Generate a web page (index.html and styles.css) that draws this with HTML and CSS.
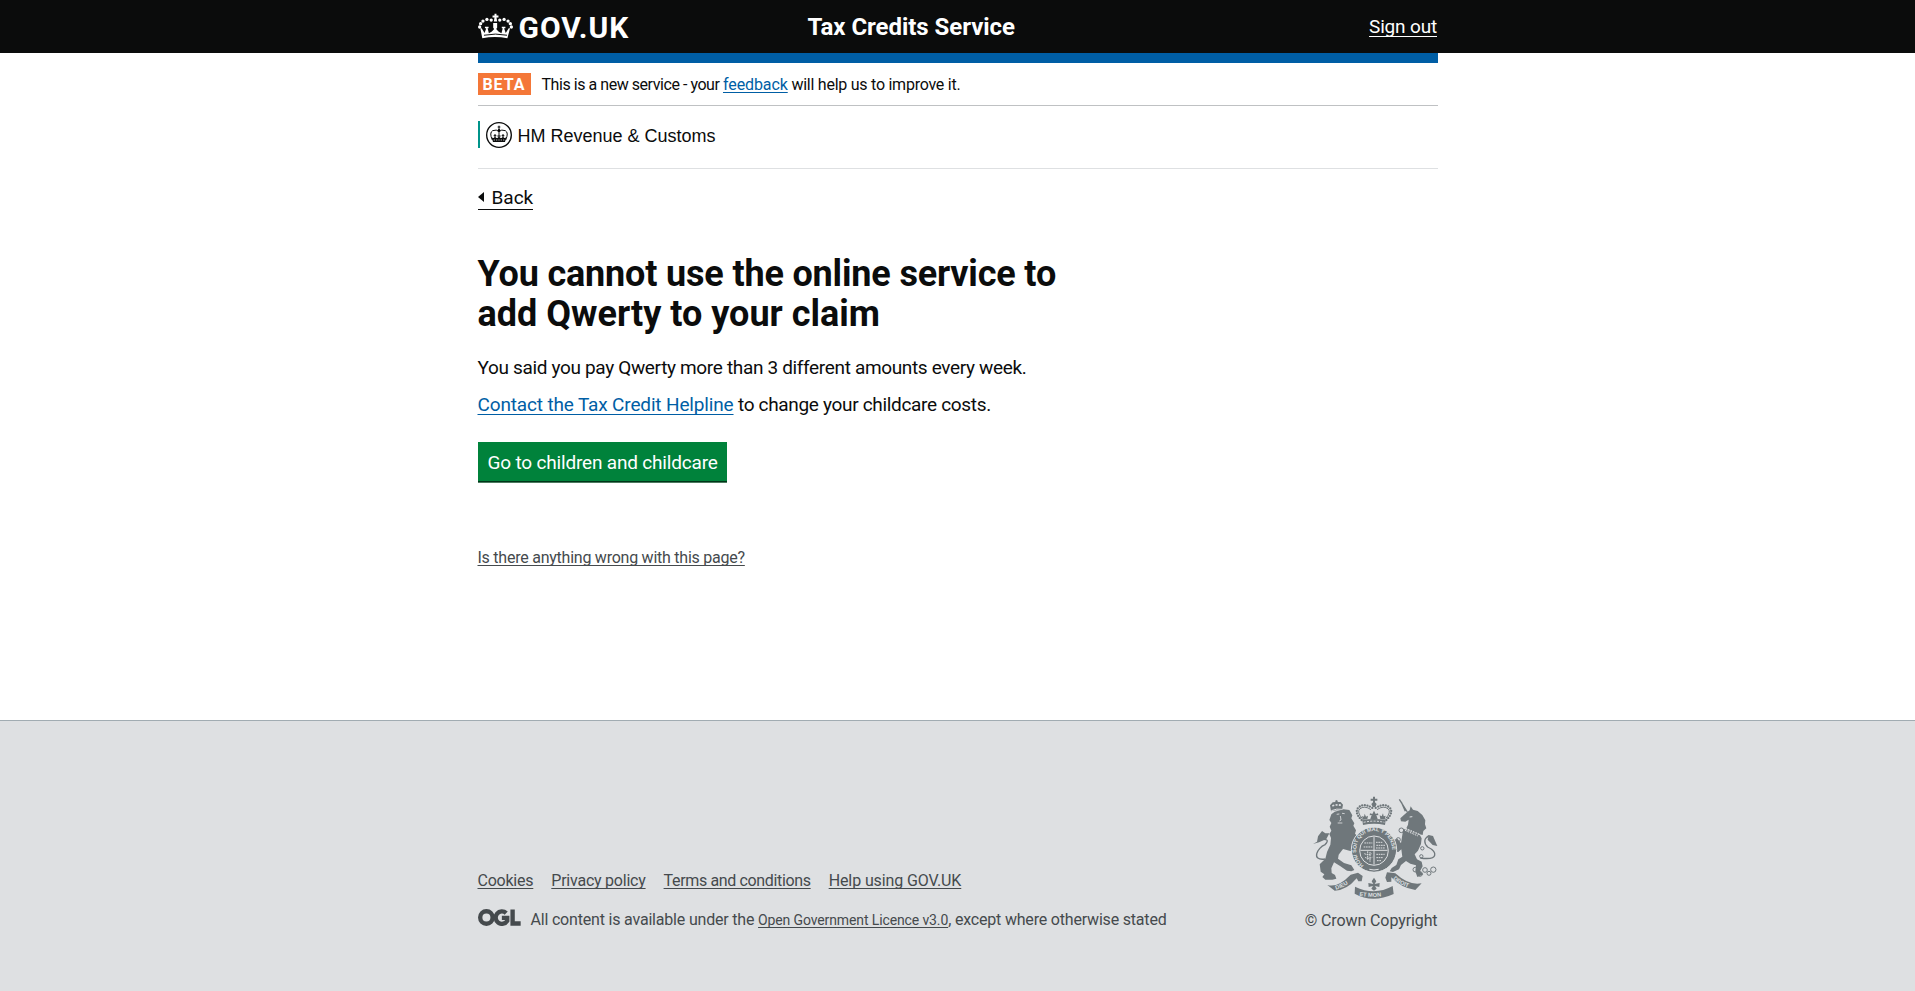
FILE: index.html
```html
<!DOCTYPE html>
<html lang="en">
<head>
<meta charset="utf-8">
<title>Tax Credits Service</title>
<link rel="stylesheet" href="styles.css">
</head>
<body>
<header class="header">
  <div class="container header-row">
    <a class="logo" href="#">
      <svg class="crown" viewBox="24 22 106 78" aria-hidden="true">
        <g fill="#fff">
          <path d="M74 24h6v5h6v6h-6l2 12h-10l2-12h-6v-6h6z"/>
          <circle cx="64" cy="43" r="5"/><circle cx="51" cy="41" r="5"/><circle cx="39" cy="46" r="5"/><circle cx="32" cy="54" r="5"/><circle cx="29" cy="64" r="5"/>
          <circle cx="90" cy="43" r="5"/><circle cx="103" cy="41" r="5"/><circle cx="115" cy="46" r="5"/><circle cx="122" cy="54" r="5"/><circle cx="125" cy="64" r="5"/>
          <path d="M31 68l4 0 9 14 5-14h-4v-5h11v5h-3l4 15 9-5 7-8-3-4v-14h12v14l-3 4 7 8 9 5 4-15h-3v-5h11v5h-4l5 14 9-14h4l-8 30q-38-7-76 0z"/>
        </g>
        <path d="M42 89q35-7 70 0" fill="none" stroke="#0b0c0c" stroke-width="3"/>
      </svg>
      <span class="logo-text">GOV.UK</span>
    </a>
    <span class="service">Tax Credits Service</span>
    <a class="signout" href="#">Sign out</a>
  </div>
</header>
<div class="container main">
  <div class="bluebar"></div>
  <div class="phase">
    <strong class="tag">BETA</strong>
    <span class="phase-text"><span class="phase-lead">This is a new service - your </span><a href="#">feedback</a> will help us to improve it.</span>
  </div>
  <div class="org">
    <div class="org-logo">
      <svg class="org-crest" viewBox="0 0 78 78" aria-hidden="true">
        <circle cx="39" cy="39" r="37" fill="none" stroke="#0b0c0c" stroke-width="4"/>
        <g fill="none" stroke="#0b0c0c" stroke-width="3">
          <path d="M19 54q-10-22 1-28 12-5 19 3 7-8 19-3 11 6 1 28"/>
          <path d="M39 28v20M39 11v12M35 15h8M27 36v12M51 36v12M23 41h8M47 41h8M34 42h10"/>
        </g>
        <circle cx="39" cy="25" r="4"/>
        <path d="M17 46q5 5 10-1 6 6 12-1 6 7 12 1 4 6 10 1l-4 14H21z" fill="#0b0c0c"/>
        <path d="M23 54h32" stroke="#fff" stroke-width="2" stroke-dasharray="4 3"/>
      </svg>
      <span class="org-name">HM Revenue &amp; Customs</span>
    </div>
  </div>
  <a class="back" href="#">Back</a>
  <h1 class="title"><span class="title-first">You cannot use the online service to</span><br>add Qwerty to your claim</h1>
  <p class="para">You said you pay Qwerty more than 3 different amounts every week.</p>
  <p class="para"><a href="#">Contact the Tax Credit Helpline</a> to change your childcare costs.</p>
  <button class="button">Go to children and childcare</button>
  <a class="report" href="#">Is there anything wrong with this page?</a>
</div>
<footer class="footer">
  <div class="container footer-row">
    <div class="footer-meta">
      <nav class="footer-links">
        <a href="#">Cookies</a><a href="#">Privacy policy</a><a class="terms" href="#">Terms and conditions</a><a class="help" href="#">Help using GOV.UK</a>
      </nav>
      <div class="licence">
        <svg class="ogl" viewBox="0 0 128 50" aria-hidden="true">
          <g fill="none" stroke="#454a4d" stroke-width="13">
            <circle cx="25" cy="25" r="18.500"/>
            <path d="M84 12a18.500 18.500 0 1 0 3 23v-9H71"/>
            <path d="M103 1v42h24"/>
          </g>
        </svg>
        <span class="licence-text">All content is available under the <a href="#">Open Government Licence v3.0</a>, except where otherwise stated</span>
      </div>
    </div>
    <div class="copyright">
      <svg class="arms" viewBox="69 46 375 310" aria-hidden="true">
        <defs>
          <path id="garter" d="M221 254a54 57 0 1 1 68 -4"/>
          <path id="motto-l" d="M138 327q28-8 56-32"/>
          <path id="motto-m" d="M208 345q46 9 94-4"/>
          <path id="motto-r" d="M309 294q22 22 64 31"/>
        </defs>
        <g fill="#6f777b">
          <path d="M123 92l-3-18 8-9 8-1 0-4 3-2 4 2 0 4 9 0 7 8-3 16-17 1z"/>
          <path d="M124 101l10-8 26-7 18 2 9 16-3 9 9 15-3 7 8 14-3 10 8 8-6 9 9 13 8 20-16 10-4-10-13 2-22-6-13 17-2 12 18 13 22 7 9 14-9 4-13-2-22-15-17-10-8 18 1 14 10 6 4 11-12 3-21 0-9-8 6-8-11-8-3-22 17-17 5-20 10-22 2-20-5-12 6-10-5-12 5-11-6-9z"/>
          <path d="M333 122l-2-9 20-18 8-6 3-12 7 10 14 4 14 12 9 16-1 12 4 12-9 8-2 12-22-5-28-13 6-13 2-15-10 6z"/>
          <path d="M340 144l50 20 5 9-2 17-9 20-10 11 7 15 14 7 3 14-8 15 10 9-18 8-6-17 2-18-17-5-13-8-15 12-6 13-18 8-10-2 6-10 14-9 6-17 12-8-3-22-9 8-20-4-11-21-15-13 9-5 21 6 14-2 10 13z"/>
          <path d="M249 48h6v6h7v6h-7v5l5 5-4 9h-8l-4-9 5-5v-5h-7v-6h7z"/>
          <path d="M217 119q35-8 70 0l-2 14q-33-7-66 0z"/>
          <path d="M219 117l-3-11 6 2 2-9 4 9 6-3-2 11zM241 115l4-12-6 1 1-6 7 2 5-10 5 10 7-2 1 6-6-1 4 12zM271 115l-2-11 6 3 4-9 2 9 6-2-3 12z"/>
          <circle cx="252" cy="207" r="67"/>
          <path d="M112 313q30 10 70-31l22-6 14 10-3 16-10 0-5-9q-31 37-66 37zM395 308q-38 8-79-30l-25-3-5 16 5 13 13-1 0-13q31 33 72 38z"/>
          <path d="M195 318q59 28 113-2l3 24q-64 29-117-1z"/>
          <path d="M252 291l-7 11 5 8-15-3 1 12 13-3-5 8 8 6 8-6-5-8 13 3 1-12-15 3 5-8z"/>
        </g>
        <g fill="none" stroke="#6f777b">
          <path d="M215 118q-22-22-11-36 17-17 43 0M289 118q22-22 11-36-17-17-43 0" stroke-width="7" stroke-linecap="round" stroke-dasharray="0 8"/>
          <path d="M217 114q-17-20-8-29 14-12 34 2M287 114q17-20 8-29-14-12-34 2" stroke-width="3"/>
          <path d="M106 235C60 242 84 199 104 193q21-21-15-16" stroke-width="4"/>
          <path d="M69 190l12-7 3-16 12-16 10 7 12 0-9 17-22 10z" fill="#6f777b" stroke="none"/>
          <path d="M328 56l24 38M334 64l12 28" stroke-width="4"/>
          <path d="M391 232c59 8 49-20 22-33q-19-20 4-34" stroke-width="4"/>
          <path d="M416 163l13 3 13 30-14-3-15-16z" fill="#6f777b" stroke="none"/>
          <g stroke-width="3"><circle cx="334" cy="149" r="7"/><circle cx="325" cy="177" r="6"/><circle cx="397" cy="203" r="5"/><circle cx="394" cy="227" r="5"/><circle cx="376" cy="267" r="7"/><circle cx="390" cy="280" r="7"/><circle cx="405" cy="268" r="7"/><circle cx="417" cy="278" r="6"/><circle cx="430" cy="267" r="8"/></g>
        </g>
        <g fill="none" stroke="#dee0e2">
          <ellipse cx="252" cy="210" rx="43" ry="44" stroke-width="3"/>
          <circle cx="252" cy="207" r="68" stroke-width="3"/>
          <path d="M252 168v84M211 209h82" stroke-width="3"/>
          <path d="M223 187h24M221 199h27M258 185h19M259 194h27M258 202h27M223 219q12 6 22 0M225 230q10 6 22 0M233 212v25M240 214v30M259 221h25M259 231h21M261 240h12" stroke-width="3" stroke-dasharray="5 2"/>
          <path d="M221 125q31-7 62 0" stroke-width="3" stroke-dasharray="6 4"/>
          <path d="M347 143l42 18M345 149l39 17" stroke-width="3" stroke-dasharray="5 3"/>
          <path d="M124 90q16-7 33-4" stroke-width="3"/>
          <path d="M127 76q13-6 26-2" stroke-width="5" stroke-dasharray="6 4"/>
          <path d="M140 101l8-1M156 98l8 1M151 106l2 12-5 3M143 127l14 0" stroke-width="2.500"/>
          <path d="M359 109l8-1" stroke-width="3"/>
          <path d="M238 266q14 4 28 0" stroke-width="3"/>
        </g>
        <g class="motto">
          <text class="motto-garter"><textPath href="#garter">HONI SOIT QUI MAL Y PENSE</textPath></text>
          <text><textPath href="#motto-l">DIEU</textPath></text>
          <text><textPath href="#motto-m">ET MON</textPath></text>
          <text><textPath href="#motto-r">DROIT</textPath></text>
        </g>
      </svg>
      <span class="copy-text">© Crown Copyright</span>
    </div>
  </div>
</footer>
</body>
</html>
```
FILE: styles.css
```css
* { box-sizing: border-box; }
body { margin: 0; background: #fff; color: #0b0c0c; font-family: Roboto, "Liberation Sans", sans-serif; font-size: 19px; line-height: 25px; }
a { color: #005ea5; text-decoration: underline; text-decoration-thickness: 1px; text-underline-offset: 3px; text-decoration-skip-ink: none; }
.container { width: 960px; margin: 0 auto; }
.header { height: 53px; background: #0b0c0c; color: #fff; }
.header a { color: #fff; }
.header-row { display: flex; align-items: flex-start; }
.logo { display: flex; width: 330px; text-decoration: none; }
.crown { width: 35px; height: 26px; margin: 12.500px 6px 0 0; }
.logo-text { font-size: 30px; font-weight: 700; line-height: 36px; padding-top: 10px; letter-spacing: 1px; }
.service { font-size: 24px; font-weight: 700; line-height: 30px; padding-top: 12px; letter-spacing: -0.05px; }
.signout { margin-left: auto; padding-top: 14px; margin-right: 0.5px; letter-spacing: -0.17px; }
.bluebar { height: 10px; background: #005ea5; }
.phase { display: flex; align-items: center; height: 43px; border-bottom: 1px solid #bfc1c3; font-size: 16px; line-height: 20px; }
.phase a { text-underline-offset: 2px; letter-spacing: -0.1px; }
.phase-text { padding-top: 2px; letter-spacing: -0.25px; white-space: nowrap; }
.phase-lead { letter-spacing: -0.45px; }
.tag { display: block; width: 53px; height: 22px; margin-right: 11px; padding-left: 5px; background: #f47738; color: #fff; line-height: 23px; letter-spacing: 0.9px; }
.org { height: 63px; padding-top: 15px; border-bottom: 1px solid #dee0e2; }
.org-logo { display: flex; align-items: center; height: 27px; border-left: 2px solid #00948a; padding-left: 6px; }
.org-crest { width: 26px; height: 26px; margin-right: 6px; }
.org-name { font-family: "Liberation Sans", Arial, sans-serif; font-size: 18px; padding-top: 4px; }
.back { display: flex; align-items: center; width: 55px; height: 25px; margin-top: 16px; border-bottom: 1px solid #0b0c0c; color: #0b0c0c; text-decoration: none; }
.back::before { content: ""; border: 5px solid transparent; border-left-width: 0; border-right: 6px solid #0b0c0c; margin-right: 8px; }
.title { margin: 44px 0 0; font-size: 36px; line-height: 40px; }
.title-first { letter-spacing: -0.17px; }
.para { margin: 21px 0 0; letter-spacing: -0.34px; }
.para a { letter-spacing: -0.15px; }
.para + .para { margin-top: 12px; letter-spacing: -0.32px; }
.button { display: block; width: 249px; height: 39px; margin: 25px 0 0; padding: 2px 0 0 10px; border: 0; background: #00823b; box-shadow: 0 1px 0 #003618, 0 2px 0 #4d7a60; color: #fff; font: inherit; letter-spacing: -0.18px; text-align: left; }
.report { display: block; width: 268px; margin-top: 67px; color: #454a4d; font-size: 16px; line-height: 20px; text-underline-offset: 2px; letter-spacing: -0.24px; white-space: nowrap; }
.footer { height: 271px; margin-top: 152px; background: #dee0e2; border-top: 1px solid #a1acb2; color: #454a4d; font-size: 16px; line-height: 20px; }
.footer a { color: #454a4d; text-underline-offset: 2px; }
.footer-row { display: flex; justify-content: space-between; padding-top: 75px; }
.footer-meta { padding-top: 75px; }
.footer-links { display: flex; gap: 18px; letter-spacing: -0.23px; }
.footer-links .terms { letter-spacing: -0.35px; }
.footer-links .help { letter-spacing: -0.1px; }
.licence { display: flex; margin-top: 18px; }
.ogl { width: 43px; height: 17px; margin: 0 10px 0 0; }
.licence-text { padding-top: 1px; letter-spacing: -0.19px; }
.licence-text a { font-size: 14px; letter-spacing: -0.12px; }
.copyright { display: flex; flex-direction: column; align-items: flex-end; }
.arms { width: 125px; height: 103.300px; }
.copy-text { margin-top: 12px; letter-spacing: -0.1px; }
.motto { fill: #dee0e2; font: 700 17px "Liberation Sans", sans-serif; }
.motto-garter { font-size: 16px; }
```
